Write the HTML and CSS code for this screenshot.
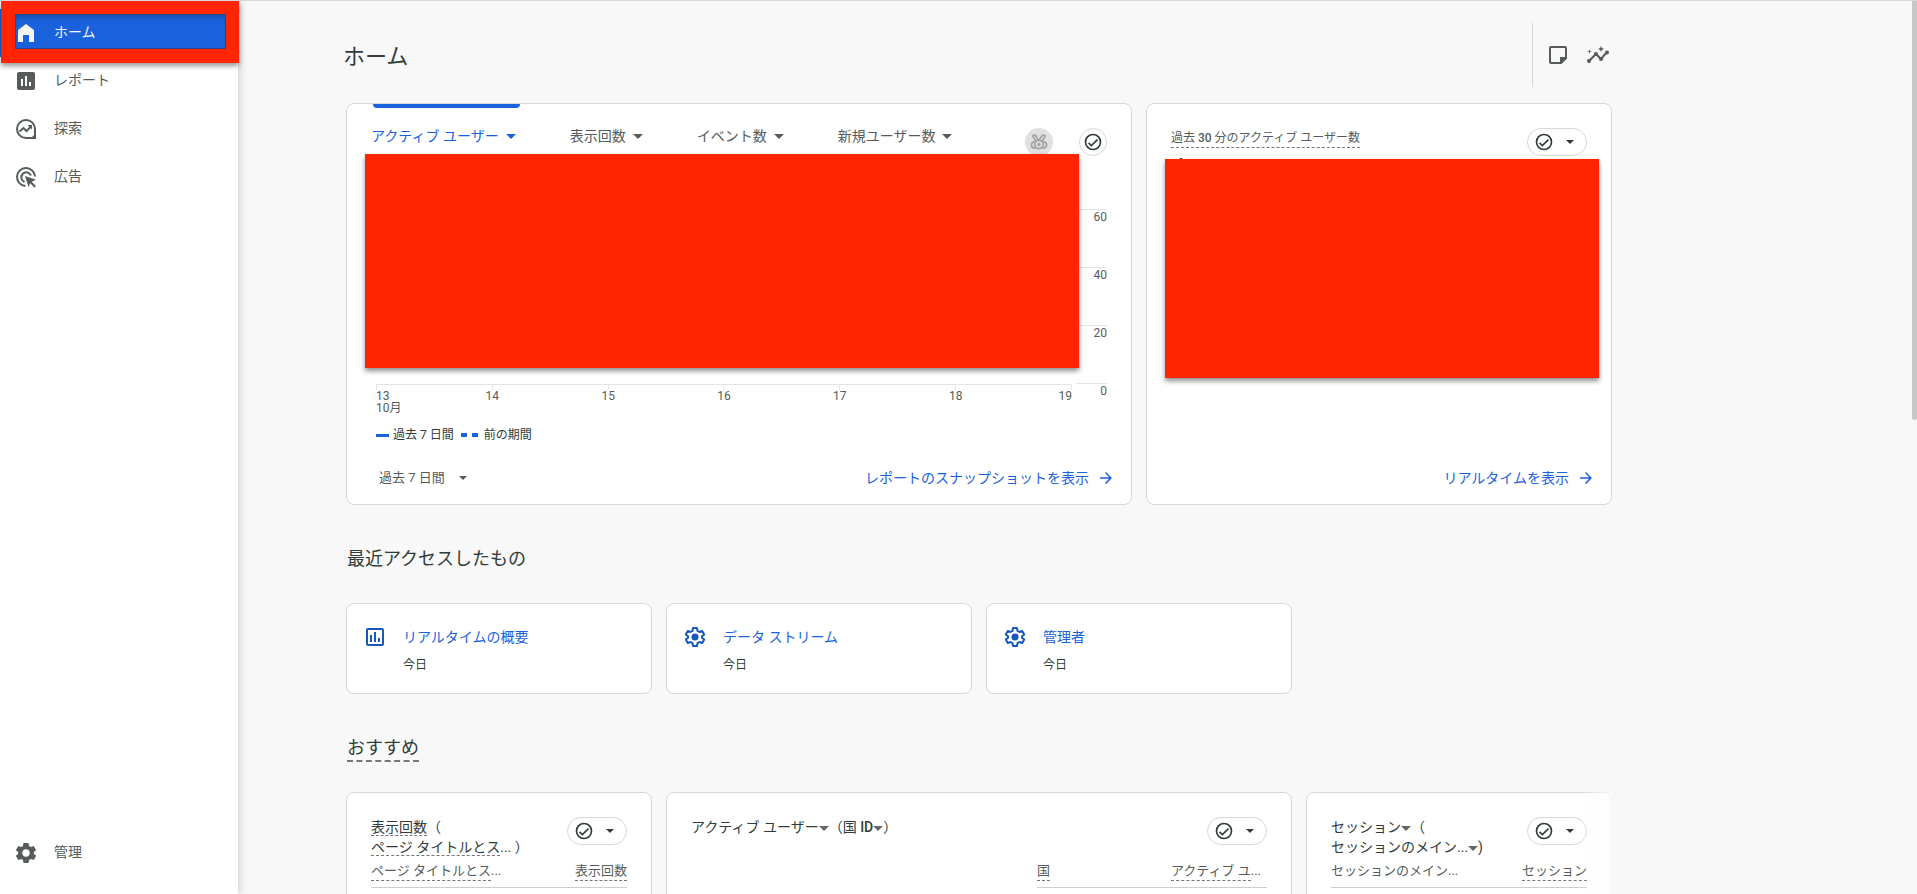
FILE: index.html
```html
<!DOCTYPE html>
<html lang="ja">
<head>
	<meta charset="UTF-8">
	<meta name="viewport" content="width=device-width, initial-scale=1">
	<title>ホーム</title>
	<link rel="stylesheet" href="styles.css">
</head>
<body>
	<!-- shared icons -->
	<svg class="sprite" aria-hidden="true">
		<symbol id="i-check" viewBox="0 0 24 24">
			<path d="M12 2a10 10 0 1 0 0 20 10 10 0 0 0 0-20zm0 18a8 8 0 1 1 0-16 8 8 0 0 1 0 16zm4.600-11.600L10 15l-2.600-2.600L6 13.800l4 4 8-8z"/>
		</symbol>
		<symbol id="i-caret" viewBox="0 0 10 5">
			<path d="M0 0h10L5 5z"/>
		</symbol>
		<symbol id="i-arrow" viewBox="0 0 24 24">
			<path d="M12 4l-1.400 1.400 5.600 5.600H4v2h12.200l-5.600 5.600L12 20l8-8z"/>
		</symbol>
		<symbol id="i-gear-line" viewBox="0 0 24 24">
			<path d="M10 3h4l.5 2.800 2 1.200 2.700-1 2 3.500-2.200 1.800v1.400l2.200 1.800-2 3.500-2.700-1-2 1.200L14 21h-4l-.5-2.800-2-1.200-2.700 1-2-3.500L5 12.700v-1.400L2.800 9.500l2-3.500 2.700 1 2-1.200z" fill="none" stroke="currentColor" stroke-width="2" stroke-linejoin="round"/>
			<circle cx="12" cy="12" r="3.500"/>
		</symbol>
	</svg>

	<div class="app">
		<nav class="sidebar">
			<a class="nav-item active" href="#">
				<svg viewBox="0 0 24 24"><path d="M4 21V9l8-6 8 6v12h-5v-7H9v7z"/></svg>
				<span>ホーム</span>
			</a>
			<a class="nav-item" href="#">
				<svg viewBox="0 0 24 24"><path d="M19 3H5a2 2 0 0 0-2 2v14c0 1.100.9 2 2 2h14a2 2 0 0 0 2-2V5a2 2 0 0 0-2-2zM9 17H7v-7h2zm4 0h-2V7h2zm4 0h-2v-4h2z"/></svg>
				<span>レポート</span>
			</a>
			<a class="nav-item" href="#">
				<svg viewBox="0 0 24 24">
					<path d="M21 12v9h-9a9 9 0 1 1 9-9z" fill="none" stroke="currentColor" stroke-width="2"/>
					<path d="M5.500 14.500L9.500 11l3 3 4.500-4.500" fill="none" stroke="currentColor" stroke-width="2"/>
					<path d="M13.500 8H18v4.500zM22 16v6h-6z"/>
				</svg>
				<span>探索</span>
			</a>
			<a class="nav-item" href="#">
				<svg viewBox="0 0 24 24">
					<path d="M11.500 21A9 9 0 1 1 21 11.500M10.500 17A5 5 0 1 1 17 10.500" fill="none" stroke="currentColor" stroke-width="2"/>
					<path d="M11 11l11 3.700-4.300 2 4.300 4.300-1.500 1.500-4.300-4.300-1.700 3.800z"/>
				</svg>
				<span>広告</span>
			</a>
			<a class="nav-item admin" href="#">
				<svg viewBox="0 0 24 24"><path fill-rule="evenodd" d="M9.500 2h5l.5 3 1.800 1 2.900-1.100 2.500 4.300L19.800 11v2l2.400 1.800-2.500 4.300-2.900-1.100-1.800 1-.5 3h-5L9 19l-1.800-1-2.900 1.100-2.500-4.300L4.200 13v-2L1.800 9.200l2.500-4.300L7.200 6 9 5zM12 8.300a3.700 3.700 0 1 0 0 7.400 3.700 3.700 0 0 0 0-7.400z"/></svg>
				<span>管理</span>
			</a>
			<div class="nav-mark"></div>
		</nav>

		<main class="main">
			<header class="page-header">
				<h1>ホーム</h1>
				<div class="page-tools">
					<button class="icon-button" aria-label="メモ">
						<svg viewBox="0 0 24 24"><path d="M4 5a1 1 0 0 1 1-1h14a1 1 0 0 1 1 1v10l-5 5H5a1 1 0 0 1-1-1z" fill="none" stroke="currentColor" stroke-width="2"/><path d="M14 21v-7h7v1l-6 6z"/></svg>
					</button>
					<button class="icon-button" aria-label="インサイト">
						<svg viewBox="0 0 24 24"><path d="M3 18l7-7 5 5 6-7" fill="none" stroke="currentColor" stroke-width="2"/><circle cx="3" cy="18" r="2"/><circle cx="10" cy="11" r="2"/><circle cx="15" cy="16" r="2"/><circle cx="21" cy="9.500" r="2"/><path d="M15 9l.9-2.100L18 6l-2.100-.9L15 3l-.9 2.100L12 6l2.100.9zM3.500 11l.5-2 2-.5-2-.5-.5-2-.5 2-2 .5 2 .5z"/></svg>
					</button>
				</div>
			</header>

			<div class="overview">
				<section class="card trend">
					<div class="trend-top">
						<div class="tabs">
							<button class="tab selected">アクティブ ユーザー<svg class="caret"><use href="#i-caret"/></svg></button>
							<button class="tab">表示回数<svg class="caret"><use href="#i-caret"/></svg></button>
							<button class="tab">イベント数<svg class="caret"><use href="#i-caret"/></svg></button>
							<button class="tab">新規ユーザー数<svg class="caret"><use href="#i-caret"/></svg></button>
						</div>
						<div class="trend-tools">
							<button class="round medal" aria-label="ベンチマーク">
								<svg viewBox="0 0 24 24" fill="none" stroke="currentColor"><path d="M4 4h4l3 6M20 4h-4l-4 6M4 4l4 7M20 4l-4 7"/><circle cx="12" cy="15" r="5"/><path d="M7 12a3 3 0 0 0-1 7h3M17 12a3 3 0 0 1 1 7h-3"/><circle cx="12" cy="15" r="1"/></svg>
							</button>
							<button class="round" aria-label="データの品質"><svg><use href="#i-check"/></svg></button>
						</div>
					</div>
					<div class="chart">
						<div class="plot">
							<div class="plot-area"></div>
							<ol class="x-axis">
								<li><span>13<br>10月</span></li>
								<li><span>14</span></li>
								<li><span>15</span></li>
								<li><span>16</span></li>
								<li><span>17</span></li>
								<li><span>18</span></li>
								<li><span>19</span></li>
							</ol>
						</div>
						<ol class="y-axis">
							<li>60</li>
							<li>40</li>
							<li>20</li>
							<li>0</li>
						</ol>
						<div class="mask mask-trend"></div>
					</div>
					<div class="legend">
						<i class="key"></i><span>過去 7 日間</span>
						<i class="key dashed"></i><span>前の期間</span>
					</div>
					<div class="card-footer">
						<label class="range">
							<select aria-label="期間"><option>過去 7 日間</option></select>
							<svg class="caret small"><use href="#i-caret"/></svg>
						</label>
						<a class="more" href="#">レポートのスナップショットを表示<svg><use href="#i-arrow"/></svg></a>
					</div>
				</section>

				<section class="card realtime">
					<div class="realtime-top">
						<h2><span class="term">過去 <b>30</b> 分のアクティブ ユーザー数</span></h2>
						<button class="pill" aria-label="データの品質"><svg class="check"><use href="#i-check"/></svg><svg class="caret small"><use href="#i-caret"/></svg></button>
					</div>
					<i class="peek"></i>
					<div class="mask mask-realtime"></div>
					<div class="card-footer">
						<a class="more" href="#">リアルタイムを表示<svg><use href="#i-arrow"/></svg></a>
					</div>
				</section>
			</div>

			<h2 class="section-title">最近アクセスしたもの</h2>
			<div class="cards">
				<a class="card recent" href="#">
					<svg viewBox="0 0 24 24"><rect x="4" y="4" width="16" height="16" rx="1" fill="none" stroke="currentColor" stroke-width="2"/><path d="M7 10h2v7H7zM11 7h2v10h-2zM15 13h2v4h-2z"/></svg>
					<span class="recent-name">リアルタイムの概要</span>
					<span class="recent-date">今日</span>
				</a>
				<a class="card recent" href="#">
					<svg><use href="#i-gear-line"/></svg>
					<span class="recent-name">データ ストリーム</span>
					<span class="recent-date">今日</span>
				</a>
				<a class="card recent" href="#">
					<svg><use href="#i-gear-line"/></svg>
					<span class="recent-name">管理者</span>
					<span class="recent-date">今日</span>
				</a>
			</div>

			<h2 class="section-title"><span class="term thick">おすすめ</span></h2>
			<div class="cards suggested">
				<section class="card suggestion">
					<div class="suggestion-top">
						<h3><span class="term">表示回数</span>（<br><span class="term">ページ タイトルとス</span>... ）</h3>
						<button class="pill" aria-label="データの品質"><svg class="check"><use href="#i-check"/></svg><svg class="caret small"><use href="#i-caret"/></svg></button>
					</div>
					<table>
						<tr>
							<th><span class="term">ページ タイトルとス</span>...</th>
							<th><span class="term">表示回数</span></th>
						</tr>
					</table>
				</section>
				<section class="card suggestion wide">
					<div class="suggestion-top">
						<h3>アクティブ ユーザー<svg class="caret"><use href="#i-caret"/></svg>（国 <b>ID</b><svg class="caret"><use href="#i-caret"/></svg>）</h3>
						<button class="pill" aria-label="データの品質"><svg class="check"><use href="#i-check"/></svg><svg class="caret small"><use href="#i-caret"/></svg></button>
					</div>
					<table>
						<tr>
							<th><span class="term">国</span></th>
							<th><span class="term">アクティブ ユ</span>...</th>
						</tr>
					</table>
				</section>
				<section class="card suggestion">
					<div class="suggestion-top">
						<h3>セッション<svg class="caret"><use href="#i-caret"/></svg>（<br>セッションのメイン...<svg class="caret"><use href="#i-caret"/></svg>)</h3>
						<button class="pill" aria-label="データの品質"><svg class="check"><use href="#i-check"/></svg><svg class="caret small"><use href="#i-caret"/></svg></button>
					</div>
					<table>
						<tr>
							<th>セッションのメイン...</th>
							<th><span class="term">セッション</span></th>
						</tr>
					</table>
				</section>
			</div>
		</main>
		<div class="scroll-thumb"></div>
	</div>
</body>
</html>
```

FILE: styles.css
```css
:root {
	--blue: #1a62dc;
	--ink: #303c3a;
	--grey: #555c5b;
	--line: #d5d7da;
	--red: #ff2500;
}
* {
	box-sizing: border-box;
	margin: 0;
	padding: 0;
}
body {
	background: #f8f8f8;
	color: var(--ink);
	font-family: Roboto, "Noto Sans CJK JP", sans-serif;
	font-size: 14px;
	line-height: 20px;
}
a {
	color: var(--blue);
	text-decoration: none;
}
button, select {
	border: none;
	background: none;
	color: inherit;
	font: inherit;
	cursor: pointer;
}
ol {
	list-style: none;
}
h1, h2, h3, th {
	font-weight: 400;
}
b {
	font-weight: 500;
}
svg {
	display: block;
	flex: none;
	width: 24px;
	height: 24px;
	fill: currentColor;
}
.sprite {
	position: absolute;
	width: 0;
	height: 0;
}
.caret {
	width: 10px;
	height: 5px;
}
.caret.small {
	width: 8px;
	height: 4px;
}
.term {
	border-bottom: 1px dashed #777;
}
h2 .term, th .term {
	padding-bottom: 2px;
}
.term.thick {
	border-bottom-width: 2px;
}

.app {
	position: relative;
	display: flex;
	height: 100vh;
	overflow: hidden;
	border-top: 1px solid var(--line);
}

/* sidebar */
.sidebar {
	position: relative;
	display: flex;
	flex-direction: column;
	flex: none;
	width: 238px;
	padding: 8px 0 17px;
	background: #fff;
	box-shadow: 2px 0 8px rgba(60, 64, 67, .2);
}
.nav-item {
	display: flex;
	align-items: center;
	gap: 16px;
	height: 48px;
	padding-left: 14px;
	color: var(--grey);
}
.nav-item span {
	padding-bottom: 2px;
}
.nav-item.active {
	background: var(--blue);
	color: #f5f5f5;
}
.nav-item.admin {
	margin-top: auto;
}
.nav-mark {
	position: absolute;
	top: 0;
	left: 1px;
	right: -1px;
	height: 62px;
	border: 14px solid var(--red);
	border-width: 13px 13px 14px 14px;
	box-shadow: 0 3px 5px rgba(0, 0, 0, .4), inset 0 0 0 1px #234a86, inset 0 4px 4px rgba(0, 0, 0, .2);
}

/* page */
.main {
	flex: 1;
	min-width: 0;
	max-width: 1374px;
	padding-left: 108px;
}
.page-header {
	display: flex;
	align-items: center;
	justify-content: space-between;
	height: 102px;
}
.page-header h1 {
	margin-left: -3px;
	padding-top: 10px;
	font-size: 22px;
	line-height: 28px;
}
.page-tools {
	display: flex;
	align-items: center;
	gap: 16px;
	height: 64px;
	padding: 0 2px 0 13px;
	margin-top: 6px;
	border-left: 1px solid var(--line);
	color: var(--grey);
}
.card {
	border: 1px solid var(--line);
	border-radius: 8px;
	background: #fff;
}
.overview {
	display: grid;
	grid-template-columns: repeat(8, 1fr);
	gap: 14px;
}
.trend, .realtime {
	position: relative;
	display: flex;
	flex-direction: column;
	min-height: 402px;
	padding: 0 24px 16px;
}
.trend {
	grid-column: span 5;
}
.realtime {
	grid-column: span 3;
}
.trend-top {
	display: flex;
	justify-content: space-between;
	height: 50px;
}
.tabs {
	display: flex;
	gap: 50px;
}
.tab {
	display: flex;
	align-items: center;
	gap: 7px;
	padding: 14px 4px 4px 0;
	border-top: 4px solid transparent;
	color: var(--grey);
	white-space: nowrap;
}
.tab.selected {
	position: relative;
	color: var(--blue);
}
.tab.selected::before {
	content: "";
	position: absolute;
	top: -4px;
	left: 2px;
	right: 0;
	height: 4px;
	border-radius: 0 0 4px 4px;
	background: var(--blue);
}
.trend-tools {
	display: flex;
	gap: 26px;
	margin-top: 24px;
}
.round, .pill {
	display: flex;
	align-items: center;
	justify-content: center;
	flex: none;
	width: 28px;
	height: 28px;
	border: 1px solid var(--line);
	border-radius: 14px;
	background: #fff;
}
.round svg, .pill .check {
	width: 20px;
	height: 20px;
}
.round.medal {
	border: none;
	background: #dfe1e3;
	color: #a0a2a4;
}
.round.medal svg {
	fill: none;
	stroke-width: 2px;
}
.pill {
	gap: 12px;
	width: 60px;
	padding-right: 6px;
}

/* chart */
.chart {
	position: relative;
	display: flex;
	gap: 4px;
	padding-left: 5px;
}
.plot {
	flex: 1;
}
.plot-area {
	height: 231px;
	border-bottom: 1px solid #e3e4e6;
}
.x-axis {
	display: flex;
	justify-content: space-between;
	height: 29px;
	color: var(--grey);
	font-size: 12px;
	line-height: 12px;
}
.x-axis li {
	display: flex;
	flex-direction: column;
	align-items: center;
	width: 1px;
	white-space: nowrap;
}
.x-axis li::before {
	content: "";
	width: 1px;
	height: 5px;
	background: #e3e4e6;
}
.x-axis li:first-child {
	align-items: flex-start;
}
.x-axis li:last-child {
	align-items: flex-end;
}
.y-axis {
	width: 31px;
	padding-top: 55px;
	color: var(--grey);
	font-size: 12px;
	line-height: 14px;
	text-align: right;
}
.y-axis li {
	height: 58px;
	border-top: 1px solid #e3e4e6;
}
.y-axis li:last-child {
	height: 17px;
}
.mask {
	position: absolute;
	background: var(--red);
	box-shadow: 0 3px 5px rgba(0, 0, 0, .45);
}
.mask-trend {
	top: 0;
	left: -6px;
	right: 28px;
	height: 214px;
}
.mask-realtime {
	top: 55px;
	left: 18px;
	right: 12px;
	height: 219px;
}
/* top of the big number behind the mask */
.peek {
	position: absolute;
	top: 54px;
	left: 32px;
	width: 4px;
	height: 4px;
	border-radius: 2px;
	background: var(--ink);
}
.legend {
	display: flex;
	align-items: center;
	margin: 11px 0 0 5px;
	font-size: 12px;
	line-height: 20px;
}
.key {
	width: 13px;
	height: 3px;
	margin-right: 4px;
	background: var(--blue);
}
.key.dashed {
	width: 17px;
	height: 4px;
	margin: 0 6px 0 7px;
	background: linear-gradient(90deg, var(--blue) 6px, transparent 6px, transparent 11px, var(--blue) 11px);
}
.card-footer {
	display: flex;
	align-items: center;
	justify-content: space-between;
	height: 20px;
	margin-top: auto;
}
.range {
	display: flex;
	align-items: center;
	gap: 14px;
	padding-left: 8px;
	color: var(--grey);
	font-size: 13px;
}
.range select {
	appearance: none;
}
.more {
	display: flex;
	align-items: center;
	gap: 8px;
	margin-left: auto;
	margin-right: -8px;
	white-space: nowrap;
}
.more svg {
	width: 18px;
	height: 18px;
}
.realtime-top {
	display: flex;
	justify-content: space-between;
	padding-top: 24px;
}
.realtime-top h2 {
	color: var(--grey);
	font-size: 12px;
	line-height: 20px;
}

/* recently accessed */
.section-title {
	margin: 42px 0 32px 1px;
	font-size: 18px;
	line-height: 24px;
}
.cards {
	display: grid;
	grid-template-columns: repeat(4, 1fr);
	gap: 14px;
}
.recent {
	display: grid;
	grid-template-columns: 24px 1fr;
	column-gap: 16px;
	row-gap: 6px;
	align-items: center;
	align-content: start;
	height: 91px;
	padding: 21px 16px;
}
.recent svg {
	color: #1558c0;
}
.recent-date {
	grid-column: 2;
	color: var(--ink);
	font-size: 12px;
}

/* suggestions */
.suggested {
	position: relative;
}
.suggested::after {
	content: "";
	position: absolute;
	top: 0;
	right: 0;
	bottom: 0;
	width: 32px;
	background: linear-gradient(90deg, rgba(250, 252, 251, 0), rgba(250, 252, 251, .8));
}
.suggestion {
	height: 300px;
	padding: 24px;
}
.suggestion.wide {
	grid-column: span 2;
}
.suggestion-top {
	display: flex;
	justify-content: space-between;
	height: 42px;
}
.suggestion h3 {
	font-size: 14px;
	line-height: 20px;
	white-space: nowrap;
}
.suggestion h3 .caret {
	display: inline-block;
	vertical-align: middle;
	color: #666;
}
.suggestion table {
	width: 100%;
	border-collapse: collapse;
	color: var(--grey);
	font-size: 13px;
}
.suggestion.wide table {
	width: 230px;
	margin-left: auto;
}
.suggestion th {
	height: 28px;
	padding-bottom: 4px;
	border-bottom: 1px solid #ccced0;
	text-align: left;
	white-space: nowrap;
}
.suggestion th:last-child {
	text-align: right;
}
.suggestion.wide th:last-child {
	padding-right: 6px;
}

.scroll-thumb {
	position: absolute;
	top: 0;
	right: 0;
	width: 5px;
	height: 419px;
	border-radius: 0 0 3px 3px;
	background: #c8c8c8;
}
```
